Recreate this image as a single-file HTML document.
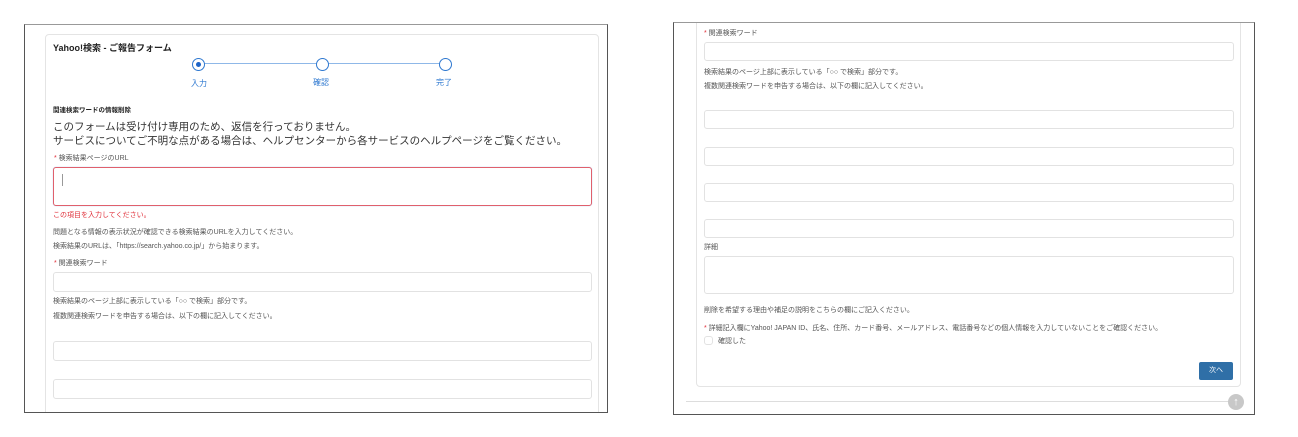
<!DOCTYPE html>
<html><head><meta charset="utf-8"><style>
*{box-sizing:border-box;margin:0;padding:0}
body{width:1298px;height:437px;background:#fff;position:relative;overflow:hidden;font-family:"Liberation Sans","Noto Sans CJK JP",sans-serif;color:#333}
.a{position:absolute;white-space:nowrap}
.frame{position:absolute;border:1px solid #555;overflow:hidden;background:#fff}
.inner{position:absolute;width:1298px;height:437px}
.card{position:absolute;border:1px solid #e4e4e4;border-radius:4px;background:#fff}
.in{position:absolute;border:1px solid #e2e2e2;border-radius:3px;background:#fff}
.s{font-size:7px;color:#555}
.r{color:#e0303a}
.c{position:absolute;width:13px;height:13px;border:1.5px solid #2e78d0;border-radius:50%;background:#fff}
</style></head><body>

<!-- LEFT -->
<div class="frame" style="left:24px;top:24px;width:584px;height:389px;border-top-color:#999">
<div class="inner" style="left:-25px;top:-25px">
<div class="card" style="left:45px;top:34px;width:554px;height:390px"></div>
<div class="a" style="left:53px;top:41px;font-size:9px;font-weight:bold;color:#222">Yahoo!検索 - ご報告フォーム</div>
<div class="a" style="left:198px;top:63px;width:248px;height:1px;background:#8fb8e8"></div>
<div class="c" style="left:192px;top:58px"><div style="position:absolute;left:2.5px;top:2.5px;width:5px;height:5px;border-radius:50%;background:#1d64c8"></div></div>
<div class="c" style="left:316px;top:58px"></div>
<div class="c" style="left:439px;top:58px"></div>
<div class="a" style="left:191px;top:78px;font-size:8px;color:#2e78d0">入力</div>
<div class="a" style="left:313px;top:77px;font-size:8px;color:#2e78d0">確認</div>
<div class="a" style="left:436px;top:77px;font-size:8px;color:#2e78d0">完了</div>
<div class="a" style="left:53px;top:104px;font-size:6.5px;font-weight:bold;color:#222">関連検索ワードの情報削除</div>
<div class="a" style="left:53px;top:120px;font-size:10.5px;color:#333;line-height:14px">このフォームは受け付け専用のため、返信を行っておりません。<br>サービスについてご不明な点がある場合は、ヘルプセンターから各サービスのヘルプページをご覧ください。</div>
<div class="a s" style="left:54px;top:153px"><span class="r">*</span> 検索結果ページのURL</div>
<div class="in" style="left:53px;top:167px;width:539px;height:39px;border:1.5px solid #e0606c;box-shadow:0 0 1px #9cc0ee"><div style="position:absolute;left:8px;top:6px;width:1px;height:12px;background:#999"></div></div>
<div class="a" style="left:53px;top:210px;font-size:7px;color:#e0303a">この項目を入力してください。</div>
<div class="a s" style="left:53px;top:227px">問題となる情報の表示状況が確認できる検索結果のURLを入力してください。</div>
<div class="a s" style="left:53px;top:241px">検索結果のURLは、「https://search.yahoo.co.jp/」から始まります。</div>
<div class="a s" style="left:54px;top:258px"><span class="r">*</span> 関連検索ワード</div>
<div class="in" style="left:53px;top:272px;width:539px;height:20px"></div>
<div class="a s" style="left:53px;top:296px">検索結果のページ上部に表示している「○○ で検索」部分です。</div>
<div class="a s" style="left:53px;top:311px">複数関連検索ワードを申告する場合は、以下の欄に記入してください。</div>
<div class="in" style="left:53px;top:341px;width:539px;height:20px"></div>
<div class="in" style="left:53px;top:379px;width:539px;height:20px"></div>
</div></div>

<!-- RIGHT -->
<div class="frame" style="left:673px;top:22px;width:582px;height:393px;border-top-color:#999">
<div class="inner" style="left:-674px;top:-23px">
<div class="card" style="left:696px;top:10px;width:545px;height:377px"></div>
<div class="a s" style="left:704px;top:28px"><span class="r">*</span> 関連検索ワード</div>
<div class="in" style="left:704px;top:42px;width:530px;height:19px"></div>
<div class="a s" style="left:704px;top:67px">検索結果のページ上部に表示している「○○ で検索」部分です。</div>
<div class="a s" style="left:704px;top:81px">複数関連検索ワードを申告する場合は、以下の欄に記入してください。</div>
<div class="in" style="left:704px;top:110px;width:530px;height:19px"></div>
<div class="in" style="left:704px;top:147px;width:530px;height:19px"></div>
<div class="in" style="left:704px;top:183px;width:530px;height:19px"></div>
<div class="in" style="left:704px;top:219px;width:530px;height:19px"></div>
<div class="a s" style="left:704px;top:242px">詳細</div>
<div class="in" style="left:704px;top:256px;width:530px;height:38px"></div>
<div class="a s" style="left:704px;top:305px">削除を希望する理由や補足の説明をこちらの欄にご記入ください。</div>
<div class="a s" style="left:704px;top:323px"><span class="r">*</span> 詳細記入欄にYahoo! JAPAN ID、氏名、住所、カード番号、メールアドレス、電話番号などの個人情報を入力していないことをご確認ください。</div>
<div class="in" style="left:704px;top:336px;width:9px;height:9px"></div>
<div class="a s" style="left:718px;top:336px">確認した</div>
<div class="a" style="left:1199px;top:362px;width:34px;height:18px;background:#2f6fa7;border-radius:2px;color:#fff;font-size:7px;text-align:center;line-height:18px">次へ</div>
<div class="a" style="left:686px;top:401px;width:555px;height:1px;background:#ddd"></div>
<div class="a" style="left:1228px;top:394px;width:16px;height:16px;border-radius:50%;background:#c8c8c8;color:#fff;font-size:11px;font-weight:bold;text-align:center;line-height:16px">↑</div>
</div></div>
</body></html>
